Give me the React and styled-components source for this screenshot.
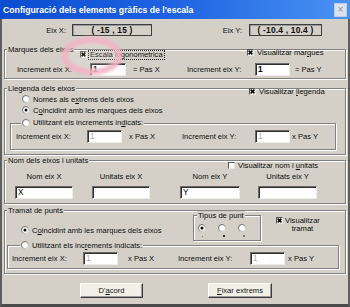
import React, { useId } from 'react';
import styled, { createGlobalStyle } from 'styled-components';

const BG = '#d4d0c8';
const FONT = '"Liberation Sans", Arial, sans-serif';

const GlobalStyle = createGlobalStyle`
  html, body { margin: 0; padding: 0; background: ${BG}; }
  body { font-family: ${FONT}; }
  *, *::before, *::after { box-sizing: border-box; }
  u { text-decoration-thickness: 1px; text-underline-offset: 1px; }
`;

const Window = styled.div`
  position: relative;
  width: 350px;
  height: 307px;
  display: flex;
  flex-direction: column;
  background: ${BG};
  overflow: hidden;
  color: #0c0c0c;
  font-size: 7.6px;
`;

const TitleBar = styled.div`
  height: 19px;
  flex: none;
  display: flex;
  align-items: center;
  justify-content: space-between;
  padding: 0 3px 0 3px;
  background: linear-gradient(to right, #0b4dd0 0%, #1f63e2 50%, #4a93f3 100%);
`;

const TitleText = styled.span`
  color: #fff;
  font-weight: bold;
  font-size: 8.7px;
  white-space: nowrap;
`;

const CloseBtn = styled.span`
  width: 13px;
  height: 14px;
  display: flex;
  align-items: center;
  justify-content: center;
  background: #dde3ee;
  border: 1px solid #c3cde0;
  color: #8e939c;
  font-size: 10px;
  line-height: 1;
`;

const Body = styled.div`
  flex: 1;
  display: flex;
  flex-direction: column;
  border-left: 2px solid #5e5e5e;
  border-right: 2px solid #5e5e5e;
  border-bottom: 3px solid #4a4a4a;
`;

const RangeRow = styled.div`
  display: flex;
  align-items: center;
  margin-top: 5px;
  height: 12px;
`;

const RangeLabel = styled.span`
  width: ${p => p.$w}px;
  margin-right: ${p => p.$gap}px;
  text-align: right;
  font-size: 7.6px;
`;

const RangeBox = styled.div`
  width: ${p => p.$w}px;
  height: 12px;
  border: 1px solid #3e3e3e;
  box-shadow: inset 1px 1px 0 #9a9a9a;
  display: flex;
  align-items: center;
  justify-content: center;
  font-weight: bold;
  font-size: 8.4px;
  letter-spacing: 0.2px;
  white-space: nowrap;
`;

const Group = styled.div`
  display: flex;
  flex-direction: column;
  border: 1px solid #808080;
  box-shadow: inset 1px 1px 0 #fff, 1px 1px 0 #fff;
  margin: ${p => p.$m};
  padding: ${p => p.$p};
  width: ${p => (p.$w ? `${p.$w}px` : 'auto')};
  flex: none;
`;

const Header = styled.div`
  display: grid;
  grid-template-columns: ${p => p.$cols || 'auto'};
  align-items: start;
  height: 9px;
  margin-top: -5px;
`;

const Legend = styled.span`
  justify-self: start;
  display: flex;
  align-items: center;
  height: 9px;
  line-height: 9px;
  padding: 0 1px;
  margin-left: ${p => p.$ml ?? 2}px;
  background: ${BG};
  white-space: nowrap;
`;

const Option = styled.label`
  display: flex;
  align-items: ${p => p.$align || 'center'};
  gap: ${p => p.$gap ?? 3}px;
  height: ${p => p.$h ?? 9}px;
  margin: ${p => p.$m || '0'};
  white-space: nowrap;
`;

const FocusLabel = styled.span`
  outline: 1px dotted #222;
  outline-offset: 0;
  padding: 0 1px;
  line-height: 8px;
`;

const TwoLine = styled.span`
  text-align: center;
  line-height: 8px;
`;

const BoxMark = styled.span`
  width: 7px;
  height: 7px;
  flex: none;
  background: #fff;
  border: 1px solid;
  border-color: #555 #e6e6e6 #e6e6e6 #555;
  display: flex;
  align-items: center;
  justify-content: center;
`;

const RadioSvg = styled.svg`
  flex: none;
  display: block;
`;

function Check({ checked }) {
  return (
    <BoxMark>
      {checked && (
        <svg width="5" height="5" viewBox="0 0 5 5">
          <path d="M0.6 0.6L4.4 4.4M4.4 0.6L0.6 4.4" stroke="#000" strokeWidth="1.5" />
        </svg>
      )}
    </BoxMark>
  );
}

function Radio({ checked }) {
  const raw = useId();
  const id = 'rg' + raw.replace(/[^a-zA-Z0-9]/g, '');
  return (
    <RadioSvg width="8" height="8" viewBox="0 0 8 8">
      <defs>
        <linearGradient id={id} x1="0" y1="0" x2="1" y2="1">
          <stop offset="0" stopColor="#4e4e4e" />
          <stop offset="0.5" stopColor="#8c8c8c" />
          <stop offset="1" stopColor="#f2f2f2" />
        </linearGradient>
      </defs>
      <circle cx="4" cy="4" r="3.5" fill="#fff" stroke={`url(#${id})`} strokeWidth="1" />
      {checked && <circle cx="4" cy="4" r="1.5" fill="#000" />}
    </RadioSvg>
  );
}

const IncRow = styled.div`
  display: grid;
  grid-template-columns: ${p => p.$cols};
  align-items: center;
  height: 13px;
  margin-top: ${p => p.$mt}px;
  padding-left: ${p => p.$pl}px;
  white-space: nowrap;
`;

const Suffix = styled.span`
  padding-left: ${p => p.$pl}px;
`;

const Field = styled.input`
  width: ${p => p.$w}px;
  height: 13px;
  margin: 0;
  padding: 0 0 0 2px;
  background: #fff;
  border: 1px solid;
  border-color: #6a6a6a #ececec #ececec #6a6a6a;
  box-shadow: inset 1px 1px 0 #2e2e2e;
  outline: none;
  font-family: ${FONT};
  font-size: 8.2px;
  font-weight: ${p => (p.$bold ? 'bold' : 'normal')};
  color: #000;
  &:disabled {
    color: #a9a9a9;
    background: #fff;
  }
`;

function Increment({ w, pl, mt, op, padX, padY, disabled, bold }) {
  const cols = w.map(v => (v === 'auto' ? 'auto' : `${v}px`)).join(' ');
  return (
    <IncRow $cols={cols} $pl={pl} $mt={mt}>
      <span>Increment eix X:</span>
      <Field $w={w[1]} defaultValue="1" disabled={disabled} $bold={bold} readOnly />
      <Suffix $pl={padX}>{op} Pas X</Suffix>
      <span>Increment eix Y:</span>
      <Field $w={w[4]} defaultValue="1" disabled={disabled} $bold={bold} readOnly />
      <Suffix $pl={padY}>{op} Pas Y</Suffix>
    </IncRow>
  );
}

const NameRow = styled.div`
  display: flex;
  margin-top: 7px;
`;

const NameCol = styled.div`
  display: flex;
  flex-direction: column;
  align-items: center;
  gap: 5px;
  margin-left: ${p => p.$ml}px;
`;

const NameLabel = styled.span`
  line-height: 9px;
  height: 9px;
  white-space: nowrap;
`;

const TopArea = styled.div`
  display: flex;
  align-items: flex-start;
`;

const LeftSlot = styled.div`
  width: ${p => p.$w}px;
  flex: none;
`;

const RadioLine = styled.div`
  display: flex;
  align-items: center;
  gap: ${p => p.$gap ?? 0}px;
  margin-top: ${p => p.$mt}px;
  padding-left: ${p => p.$pl}px;
`;

const Dot = styled.span`
  width: ${p => p.$s}px;
  height: ${p => p.$s}px;
  background: ${p => p.$c};
  margin-left: ${p => p.$ml}px;
  border-radius: ${p => (p.$round ? '50%' : '0')};
`;

const ButtonRow = styled.div`
  display: flex;
  margin-top: 9px;
  padding-left: 78px;
  gap: 65px;
`;

const Button = styled.button`
  width: ${p => p.$w}px;
  height: 15px;
  padding: 0;
  background: #f2f0e6;
  border: 1px solid;
  border-color: #fff #3c3c3c #3c3c3c #fff;
  box-shadow: inset -1px -1px 0 #9a9a9a;
  font-family: ${FONT};
  font-size: 7.6px;
  color: #111;
`;

const Overlay = styled.svg`
  position: absolute;
  left: 0;
  top: 0;
  pointer-events: none;
`;

export default function App() {
  return (
    <>
      <GlobalStyle />
      <Window>
        <TitleBar>
          <TitleText>Configuració dels elements gràfics de l'escala</TitleText>
          <CloseBtn>×</CloseBtn>
        </TitleBar>
        <Body>
          <RangeRow>
            <RangeLabel $w={64} $gap={6}>Eix X:</RangeLabel>
            <RangeBox $w={80}>( -15 , 15 )</RangeBox>
            <RangeLabel $w={90} $gap={7}>Eix Y:</RangeLabel>
            <RangeBox $w={73}>( -10.4 , 10.4 )</RangeBox>
          </RangeRow>

          <Group $m="13px 2px 0 2px" $p="0 0 2px 0">
            <Header $cols="75px 167px 1fr">
              <Legend>Marques dels eixos</Legend>
              <Option $m="5px 0 0 0" $gap={2}>
                <Check checked />
                <FocusLabel>Escala logonometrica</FocusLabel>
              </Option>
              <Option $m="3px 0 0 0" $gap={3}>
                <Check checked />
                <span>Visualitzar mar<u>q</u>ues</span>
              </Option>
            </Header>
            <Increment w={[73, 36, 61, 68, 35, 'auto']} pl={12} mt={9} op="=" padX={7} padY={5} bold />
          </Group>

          <Group $m="9px 2px 0 2px" $p="0 0 4px 0">
            <Header $cols="244px 1fr">
              <Legend>Llegenda dels eixos</Legend>
              <Option $m="3px 0 0 0">
                <Check checked />
                <span>Visualitzar <u>l</u>legenda</span>
              </Option>
            </Header>
            <RadioLine $mt={1} $pl={17}>
              <Option $h={10}>
                <Radio />
                <span>Només als e<u>x</u>trems dels eixos</span>
              </Option>
            </RadioLine>
            <RadioLine $mt={1} $pl={17}>
              <Option $h={10}>
                <Radio checked />
                <span>C<u>o</u>incidint amb les marques dels eixos</span>
              </Option>
            </RadioLine>
            <Group $m="8px 9px 0 5px" $p="0 0 6px 0">
              <Header>
                <Legend $ml={10}>
                  <Option $m="-2px 0 0 0">
                    <Radio />
                    <span>Utilitzant els increments in<u>d</u>icats:</span>
                  </Option>
                </Legend>
              </Header>
              <Increment w={[71, 35, 60, 73, 35, 'auto']} pl={5} mt={2} op="x" padX={7} padY={2} disabled />
            </Group>
          </Group>

          <Group $m="5px 2px 0 2px" $p="0 0 4px 0">
            <Header $cols="223px 1fr">
              <Legend>Nom dels eixos i unitats</Legend>
              <Option $m="5px 0 0 0">
                <Check />
                <span>Visualitzar nom i <u>u</u>nitats</span>
              </Option>
            </Header>
            <NameRow>
              <NameCol $ml={10}>
                <NameLabel>Nom eix X</NameLabel>
                <Field $w={58} defaultValue="X" readOnly />
              </NameCol>
              <NameCol $ml={19}>
                <NameLabel>Unitats eix X</NameLabel>
                <Field $w={58} defaultValue="" readOnly />
              </NameCol>
              <NameCol $ml={30}>
                <NameLabel>Nom eix Y</NameLabel>
                <Field $w={60} defaultValue="Y" readOnly />
              </NameCol>
              <NameCol $ml={18}>
                <NameLabel>Unitats eix Y</NameLabel>
                <Field $w={59} defaultValue="" readOnly />
              </NameCol>
            </NameRow>
          </Group>

          <Group $m="6px 2px 0 2px" $p="0 0 4px 0">
            <Header>
              <Legend>Tramat de punts</Legend>
            </Header>
            <TopArea>
              <LeftSlot $w={188}>
                <RadioLine $mt={10} $pl={16}>
                  <Option $h={10}>
                    <Radio checked />
                    <span>C<u>o</u>incidint amb les marques dels eixos</span>
                  </Option>
                </RadioLine>
              </LeftSlot>
              <Group $m="0" $p="0 0 3px 0" $w={68}>
                <Header>
                  <Legend $ml={3}>Tipus de punt</Legend>
                </Header>
                <RadioLine $mt={4} $pl={4} $gap={12}>
                  <Radio checked />
                  <Radio />
                  <Radio />
                </RadioLine>
                <RadioLine $mt={3} $pl={0}>
                  <Dot $s={1} $c="#777" $ml={8} />
                  <Dot $s={2} $c="#000" $ml={20} $round />
                  <Dot $s={2} $c="#777" $ml={18} />
                </RadioLine>
              </Group>
              <Option $m="2px 0 0 15px" $align="flex-start" $h={16} $gap={2}>
                <Check checked />
                <TwoLine>Visualitzar<br />tramat</TwoLine>
              </Option>
            </TopArea>
            <Group $m="4px 6px 0 2px" $p="0 0 3px 0">
              <Header>
                <Legend $ml={12}>
                  <Option $m="-1px 0 0 0">
                    <Radio />
                    <span>Utilitzant els inc<u>r</u>ements indicats:</span>
                  </Option>
                </Legend>
              </Header>
              <Increment w={[71, 35, 60, 72, 35, 'auto']} pl={4} mt={2} op="x" padX={10} padY={3} disabled />
            </Group>
          </Group>

          <ButtonRow>
            <Button $w={63}>D'<u>a</u>cord</Button>
            <Button $w={64}><u>F</u>ixar extrems</Button>
          </ButtonRow>
        </Body>

        <Overlay width="350" height="307" viewBox="0 0 350 307">
          <defs>
            <filter id="ringblur" x="-50%" y="-50%" width="200%" height="200%">
              <feGaussianBlur stdDeviation="1.5" />
            </filter>
          </defs>
          <ellipse cx="92" cy="56" rx="27" ry="16" fill="rgba(255,255,255,0.12)" stroke="rgba(243,180,198,0.9)" strokeWidth="6.5" filter="url(#ringblur)" />
        </Overlay>
      </Window>
    </>
  );
}
